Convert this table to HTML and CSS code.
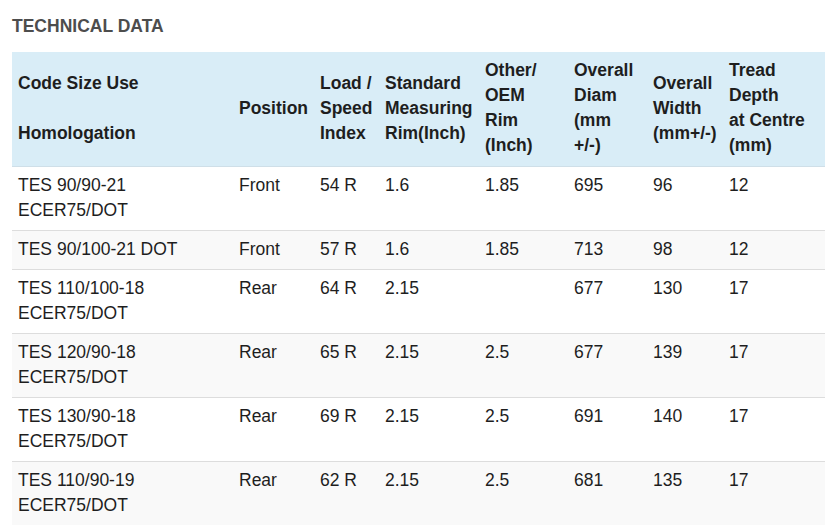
FILE: index.html
```html
<!DOCTYPE html>
<html>
<head>
<meta charset="utf-8">
<link rel="stylesheet" href="styles.css">
</head>
<body>
<div class="page">
  <h2 class="title">TECHNICAL DATA</h2>
  <table class="spec">
    <colgroup>
      <col class="c1"><col class="c2"><col class="c3"><col class="c4"><col class="c5"><col class="c6"><col class="c7"><col class="c8">
    </colgroup>
    <thead>
      <tr>
        <th>Code Size Use<br>&nbsp;<br>Homologation</th>
        <th>Position</th>
        <th>Load /<br>Speed<br>Index</th>
        <th>Standard<br>Measuring<br>Rim(Inch)</th>
        <th>Other/<br>OEM<br>Rim<br>(Inch)</th>
        <th>Overall<br>Diam<br>(mm<br>+/-)</th>
        <th>Overall<br>Width<br>(mm+/-)</th>
        <th>Tread<br>Depth<br>at Centre<br>(mm)</th>
      </tr>
    </thead>
    <tbody>
      <tr><td>TES 90/90-21<br>ECER75/DOT</td><td>Front</td><td>54 R</td><td>1.6</td><td>1.85</td><td>695</td><td>96</td><td>12</td></tr>
      <tr><td>TES 90/100-21 DOT</td><td>Front</td><td>57 R</td><td>1.6</td><td>1.85</td><td>713</td><td>98</td><td>12</td></tr>
      <tr><td>TES 110/100-18<br>ECER75/DOT</td><td>Rear</td><td>64 R</td><td>2.15</td><td></td><td>677</td><td>130</td><td>17</td></tr>
      <tr><td>TES 120/90-18<br>ECER75/DOT</td><td>Rear</td><td>65 R</td><td>2.15</td><td>2.5</td><td>677</td><td>139</td><td>17</td></tr>
      <tr><td>TES 130/90-18<br>ECER75/DOT</td><td>Rear</td><td>69 R</td><td>2.15</td><td>2.5</td><td>691</td><td>140</td><td>17</td></tr>
      <tr><td>TES 110/90-19<br>ECER75/DOT</td><td>Rear</td><td>62 R</td><td>2.15</td><td>2.5</td><td>681</td><td>135</td><td>17</td></tr>
    </tbody>
  </table>
</div>
</body>
</html>
```
FILE: styles.css
```css
html, body {
  margin: 0;
  padding: 0;
  background: #fff;
}
.page {
  padding: 16px 12px 0 12px;
  font-family: "Liberation Sans", Arial, sans-serif;
  color: #1e1e1e;
}
.title {
  margin: 0 0 16px 0;
  font-size: 17.5px;
  line-height: 20px;
  font-weight: bold;
  color: #4d4d4d;
}
.spec {
  border-collapse: collapse;
  table-layout: fixed;
  width: 813px;
  font-size: 17.5px;
  line-height: 25px;
}
.c1 { width: 221px; }
.c2 { width: 81px; }
.c3 { width: 65px; }
.c4 { width: 100px; }
.c5 { width: 89px; }
.c6 { width: 79px; }
.c7 { width: 76px; }
.c8 { width: 102px; }
.spec th {
  background: #d9edf7;
  text-align: left;
  vertical-align: middle;
  font-weight: bold;
  padding: 6px 6px 8px 6px;
  border-bottom: 1px solid #cfdfe8;
  white-space: nowrap;
}
.spec td {
  vertical-align: top;
  padding: 6px 6px 7px 6px;
  border-top: 1px solid #ddd;
  white-space: nowrap;
}
.spec tbody tr:nth-child(even) td {
  background: #f9f9f9;
}
```
